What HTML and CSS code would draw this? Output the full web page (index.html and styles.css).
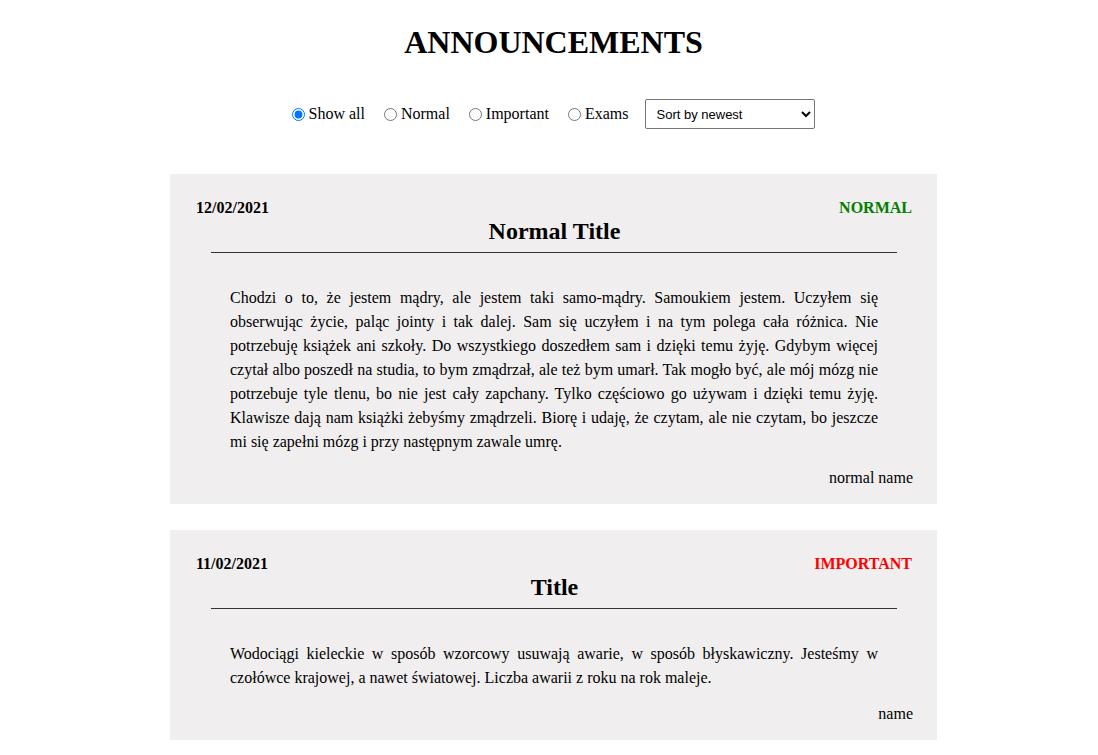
FILE: index.html
```html
<!DOCTYPE html>
<html lang="pl">
<head>
<meta charset="utf-8">
<title>Announcements</title>
<link rel="stylesheet" href="styles.css">
</head>
<body>
<div class="page">
  <h1 class="page-title">ANNOUNCEMENTS</h1>
  <div class="controls">
    <label class="filter"><input type="radio" name="type" checked>Show all</label>
    <label class="filter"><input type="radio" name="type">Normal</label>
    <label class="filter"><input type="radio" name="type">Important</label>
    <label class="filter"><input type="radio" name="type">Exams</label>
    <select class="sort">
      <option>Sort by newest</option>
      <option>Sort by oldest</option>
    </select>
  </div>
  <div class="list">
    <article class="card">
      <div class="card-head">
        <span class="date">12/02/2021</span>
        <span class="type type-normal">NORMAL</span>
      </div>
      <h2 class="card-title">Normal Title</h2>
      <hr class="rule">
      <p class="card-body">Chodzi o to, że jestem mądry, ale jestem taki samo-mądry. Samoukiem jestem. Uczyłem się obserwując życie, paląc jointy i tak dalej. Sam się uczyłem i na tym polega cała różnica. Nie potrzebuję książek ani szkoły. Do wszystkiego doszedłem sam i dzięki temu żyję. Gdybym więcej czytał albo poszedł na studia, to bym zmądrzał, ale też bym umarł. Tak mogło być, ale mój mózg nie potrzebuje tyle tlenu, bo nie jest cały zapchany. Tylko częściowo go używam i dzięki temu żyję. Klawisze dają nam książki żebyśmy zmądrzeli. Biorę i udaję, że czytam, ale nie czytam, bo jeszcze mi się zapełni mózg i przy następnym zawale umrę.</p>
      <div class="author">normal name</div>
    </article>
    <article class="card">
      <div class="card-head">
        <span class="date">11/02/2021</span>
        <span class="type type-important">IMPORTANT</span>
      </div>
      <h2 class="card-title">Title</h2>
      <hr class="rule">
      <p class="card-body">Wodociągi kieleckie w sposób wzorcowy usuwają awarie, w sposób błyskawiczny. Jesteśmy w czołówce krajowej, a nawet światowej. Liczba awarii z roku na rok maleje.</p>
      <div class="author">name</div>
    </article>
  </div>
</div>
</body>
</html>
```
FILE: styles.css
```css
html, body {
  margin: 0;
  padding: 0;
  background: #ffffff;
}
body {
  font-family: "Liberation Serif", "Times New Roman", serif;
  font-size: 16px;
  color: #000;
}
.page {
  padding-left: 9px;
}
.page-title {
  margin: 24px 0 0;
  font-size: 32px;
  line-height: 37px;
  font-weight: bold;
  text-align: center;
}
.controls {
  margin-top: 38px;
  display: flex;
  justify-content: center;
  align-items: center;
  gap: 19px;
  height: 30px;
}
.filter {
  display: flex;
  align-items: center;
  font-size: 16px;
  line-height: 20px;
}
.filter input {
  margin: 0 4px 0 0;
  width: 13px;
  height: 13px;
}
.sort {
  width: 170px;
  height: 30px;
  margin-left: -2px;
  font-family: "Liberation Sans", Arial, sans-serif;
  font-size: 13px;
  padding: 0 6px;
  border: 1px solid #767676;
  border-radius: 2px;
  background: #fff;
  color: #000;
}
.list {
  margin-top: 45px;
  display: flex;
  flex-direction: column;
  gap: 26px;
  align-items: center;
}
.card {
  width: 767px;
  box-sizing: border-box;
  background: #f0eeee;
  padding: 24px 24px 16px 26px;
}
.card-head {
  display: flex;
  justify-content: space-between;
  font-weight: bold;
  line-height: 20px;
}
.type { margin-right: 1px; }
.type-normal { color: #008000; }
.type-important { color: #ff0000; }
.card-title {
  margin: 0;
  font-size: 24px;
  line-height: 27px;
  text-align: center;
}
.rule {
  margin: 7px 16px 0 15px;
  border: 0;
  border-top: 1px solid #333;
  height: 0;
}
.card-body {
  margin: 33px 35px 0 34px;
  line-height: 24px;
  text-align: justify;
}
.author {
  margin-top: 14px;
  text-align: right;
  line-height: 20px;
}
```
